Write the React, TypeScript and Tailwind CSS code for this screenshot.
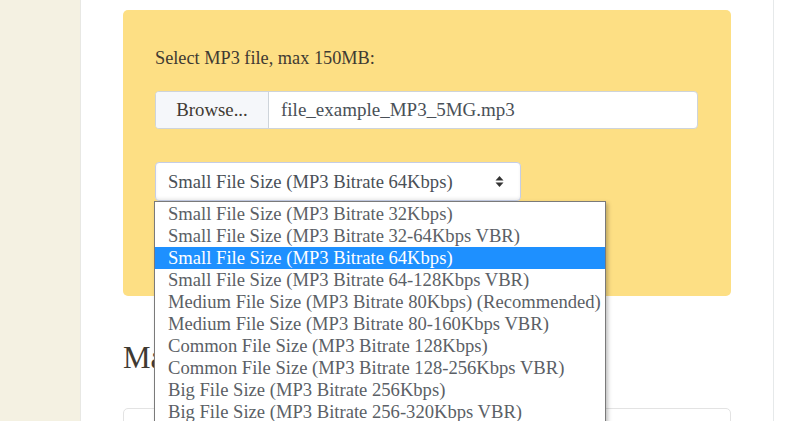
import React from 'react';

const options = [
  'Small File Size (MP3 Bitrate 32Kbps)',
  'Small File Size (MP3 Bitrate 32-64Kbps VBR)',
  'Small File Size (MP3 Bitrate 64Kbps)',
  'Small File Size (MP3 Bitrate 64-128Kbps VBR)',
  'Medium File Size (MP3 Bitrate 80Kbps) (Recommended)',
  'Medium File Size (MP3 Bitrate 80-160Kbps VBR)',
  'Common File Size (MP3 Bitrate 128Kbps)',
  'Common File Size (MP3 Bitrate 128-256Kbps VBR)',
  'Big File Size (MP3 Bitrate 256Kbps)',
  'Big File Size (MP3 Bitrate 256-320Kbps VBR)',
];

const selected = 2;

export default function App() {
  return (
    <div
      className="relative flex h-[421px] w-[800px] overflow-hidden bg-white text-[#495057]"
      style={{ fontFamily: '"Liberation Serif", "DejaVu Serif", serif' }}
    >
      {/* Side strip */}
      <div className="w-[81px] shrink-0 border-r border-[#e8e8e4] bg-[#f4f1e2]" />

      {/* Main column */}
      <div className="w-[693px] shrink-0 border-r border-[#e6e9ea] px-[42px]">
        <div className="mt-[10px] h-[286px] rounded-[5px] bg-[#fddf84] px-[32px] pt-[35px]">
          <p className="text-[18.3px] leading-[26px] text-[#3f3a32]">Select MP3 file, max 150MB:</p>

          <div className="mt-[20px] flex h-[38px] w-[543px] overflow-hidden rounded-[4px] border border-[#ced4da] bg-white">
            <div className="flex w-[113px] items-center justify-center border-r border-[#ced4da] bg-[#f5f7fa] text-[18.8px] text-[#3f3a32]">
              Browse...
            </div>
            <div className="flex items-center pl-[12px] text-[19px]">file_example_MP3_5MG.mp3</div>
          </div>

          <div className="mt-[33px] flex h-[39px] w-[366px] items-center justify-between rounded-[4px] border border-[#c5cde5] bg-white pl-[12px] pr-[16px] text-[18.6px] shadow-[inset_0_-2px_3px_rgba(0,0,0,0.06)]">
            <span>Small File Size (MP3 Bitrate 64Kbps)</span>
            <svg width="9" height="13" viewBox="0 0 9 13" className="text-[#333]">
              <path d="M4.5 1 L8.5 5.5 H0.5 Z" fill="currentColor" />
              <path d="M4.5 12 L8.5 7.5 H0.5 Z" fill="currentColor" />
            </svg>
          </div>
        </div>

        <h2 className="mt-[44px] text-[31px] leading-[36px] text-[#3f3a32]">Make it smaller</h2>

        <div className="mt-[32px] h-[60px] rounded-[5px] border border-[#e3e3e3]" />
      </div>

      {/* Open dropdown list */}
      <ul className="absolute left-[154px] top-[201px] w-[452px] border border-[#7a7a7a] bg-white py-[1px] shadow-[2px_2px_4px_rgba(0,0,0,0.25)]">
        {options.map((o, i) => (
          <li
            key={o}
            className={
              i === selected
                ? 'h-[22px] whitespace-nowrap bg-[#1e90ff] pl-[13px] text-[18.6px] leading-[22px] text-white'
                : 'h-[22px] whitespace-nowrap pl-[13px] text-[18.6px] leading-[22px] text-[#5b5f66]'
            }
          >
            {o}
          </li>
        ))}
      </ul>
    </div>
  );
}
